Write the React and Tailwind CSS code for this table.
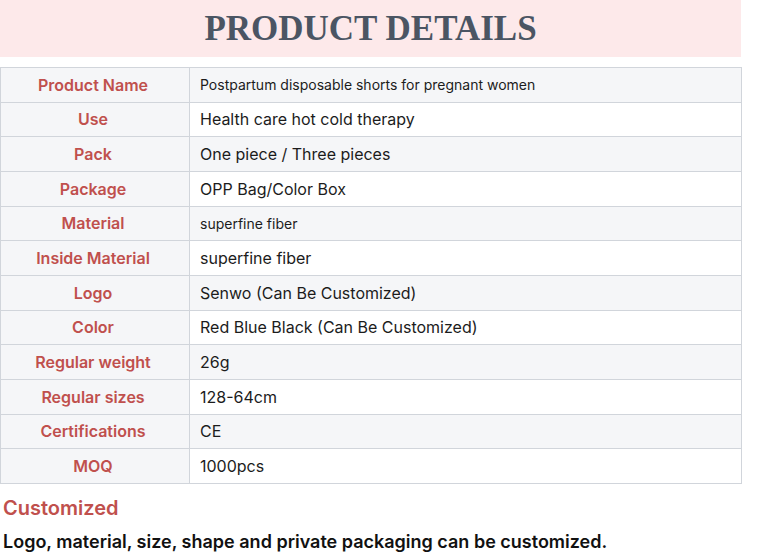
import React from "react";

const rows = [
  ["Product Name", "Postpartum disposable shorts for pregnant women", true],
  ["Use", "Health care hot cold therapy"],
  ["Pack", "One piece / Three pieces"],
  ["Package", "OPP Bag/Color Box"],
  ["Material", "superfine fiber", true],
  ["Inside Material", "superfine fiber"],
  ["Logo", "Senwo (Can Be Customized)"],
  ["Color", "Red Blue Black (Can Be Customized)"],
  ["Regular weight", "26g"],
  ["Regular sizes", "128-64cm"],
  ["Certifications", "CE"],
  ["MOQ", "1000pcs"],
];

const App = () => {
  return (
    <div className="w-[757px] bg-white font-['Inter',sans-serif]">
      <div className="w-[741px] h-[57px] bg-[#fde9ea] flex items-center justify-center">
        <h1 className="font-['Liberation_Serif',serif] font-bold text-[35px] text-[#4b5563] leading-none">
          PRODUCT DETAILS
        </h1>
      </div>
      <table className="w-[742px] mt-[10px] border-collapse border border-[#d1d5db]">
        <tbody>
          {rows.map(([label, value, small], i) => (
            <tr key={label} className={i % 2 === 0 ? "bg-[#f5f6f8]" : "bg-white"}>
              <td className="w-[189px] h-[34.67px] py-0 pl-0 pr-[4px] bg-[#f5f6f8] border border-[#d1d5db] text-center text-[16px] font-semibold text-[#c0504d]">
                {label}
              </td>
              <td
                className={
                  "h-[34.67px] px-[10px] py-0 border border-[#d1d5db] text-[#1c1c1c] " +
                  (small ? "text-[14px]" : "text-[16px]")
                }
              >
                {value}
              </td>
            </tr>
          ))}
        </tbody>
      </table>
      <h2 className="mt-[12px] ml-[3px] text-[20px] font-semibold text-[#c0504d] leading-tight">
        Customized
      </h2>
      <p className="mt-[7px] ml-[3px] text-[18px] font-semibold text-[#111111]">
        Logo, material, size, shape and private packaging can be customized.
      </p>
    </div>
  );
};

export default App;
